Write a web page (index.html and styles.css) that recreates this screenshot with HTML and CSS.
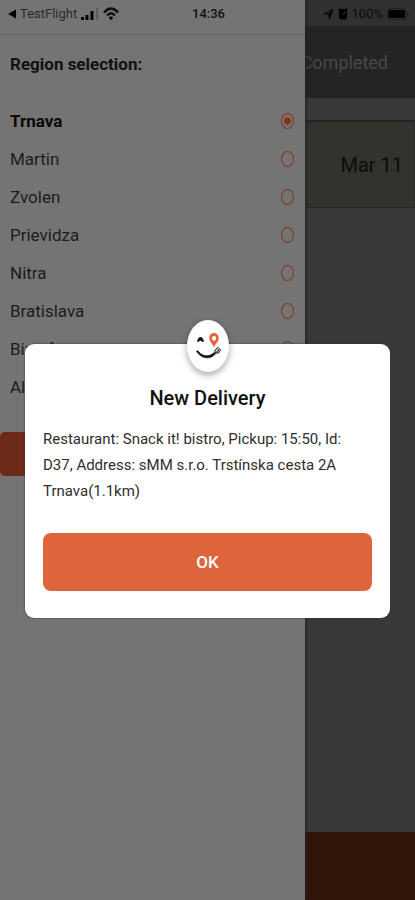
FILE: index.html
```html
<!DOCTYPE html>
<html lang="en">
<head>
<meta charset="utf-8">
<meta name="viewport" content="width=device-width, initial-scale=1">
<title>New Delivery</title>
<link rel="stylesheet" href="styles.css">
</head>
<body>
<div class="app">
  <main class="page">
    <nav class="tabs"><a href="#completed">Completed</a></nav>
    <section class="day"><h2>Mar 11</h2></section>
    <footer class="page-footer"></footer>
  </main>

  <aside class="drawer">
    <form class="regions">
      <h1>Region selection:</h1>
      <label class="region"><span>Trnava</span><input type="radio" name="region" checked></label>
      <label class="region"><span>Martin</span><input type="radio" name="region"></label>
      <label class="region"><span>Zvolen</span><input type="radio" name="region"></label>
      <label class="region"><span>Prievidza</span><input type="radio" name="region"></label>
      <label class="region"><span>Nitra</span><input type="radio" name="region"></label>
      <label class="region"><span>Bratislava</span><input type="radio" name="region"></label>
      <label class="region"><span>Bizref</span><input type="radio" name="region"></label>
      <label class="region"><span>All</span><input type="radio" name="region"></label>
      <button class="apply" type="button" aria-label="Apply"></button>
    </form>
  </aside>

  <header class="status">
    <div class="status-left">
      <svg width="8" height="10" viewBox="0 0 8 10"><path d="M8 0.5v9L0 5z"/></svg>
      <span class="carrier">TestFlight</span>
      <svg width="18" height="12" viewBox="0 0 18 12"><path d="M0 9h3v3H0zM4.500 7h3v5h-3zM9.500 3h3v9h-3z"/><path d="M15 0h2v12h-2z" opacity=".2"/></svg>
      <svg width="16" height="14" viewBox="0 0 16 14"><g fill="none" stroke="#111" stroke-width="2.400"><path d="M1 5.500Q8-2.500 15 5.500"/><path d="M4 8.500Q8 4 12 8.500"/></g><path d="M5.800 10.500Q8 8.500 10.200 10.500L8 13.200z"/></svg>
    </div>
    <time>14:36</time>
    <div class="status-right">
      <svg width="11" height="12" viewBox="0 0 11 12"><path d="M1 6 9.800 1.500 6.500 10.500 5.800 6.200z" fill="none" stroke="#0a0a0a" stroke-width="1.200" stroke-linejoin="round"/><path d="M5.500 6 9.800 1.500 6.500 10.500z"/></svg>
      <svg width="10" height="12" viewBox="0 0 10 12"><rect x="1" y="1" width="8" height="10.500" rx="2"/><path d="M.5 2 2.500.5M9.500 2 7.500.5" stroke="#0a0a0a" stroke-width="1.400"/><path d="M5 6.500 7 4" fill="none" stroke="#444"/></svg>
      <span>100%</span>
      <svg width="22" height="12" viewBox="0 0 22 12"><rect x=".5" y=".5" width="18.500" height="11" rx="2.500" fill="none" stroke="#202020"/><rect x="1.500" y="2" width="16.500" height="8" rx="1"/><path d="M20.200 4v4q1.300-.5 1.300-2t-1.300-2z" fill="#1b1b1b"/></svg>
    </div>
  </header>

  <div class="backdrop">
    <div class="dialog" role="dialog" aria-labelledby="dialog-title">
      <div class="badge">
        <svg width="28" height="32" viewBox="0 0 28 32">
          <path d="M3 11.500Q4 7 6.500 7T10 11.500L8.500 12Q6.500 9.500 4.500 12z" fill="#161616"/>
          <path d="M2.500 21.500C4 23 5 25 8 26.500 13 29 18.500 28 22 23L21 22C17 25.800 12 26.800 8 24.500 5.500 23 4.500 21.500 3.500 20.500z" fill="#161616" stroke="#161616" stroke-width=".8"/>
          <path d="M21 23Q20.500 20 22 19.500L24.500 17M22 23 25.800 18.500M22.500 23.500Q25 23 25.500 21.500L27 19.500" fill="none" stroke="#444" stroke-width="1.200"/>
          <path fill-rule="evenodd" fill="#e0643c" d="M20 3c-2.700 0-4.700 2.200-4.700 5.200 0 3.200 3.200 5.600 4.700 9 1.500-3.400 4.700-5.800 4.700-9 0-3-2-5.200-4.700-5.200zm0 2.700a2.100 2.500 0 1 1 0 5 2.100 2.500 0 1 1 0-5z"/>
        </svg>
      </div>
      <h2 id="dialog-title">New Delivery</h2>
      <p>Restaurant: Snack it! bistro, Pickup: 15:50, Id: D37, Address: sMM s.r.o. Trstínska cesta 2A Trnava(1.1km)</p>
      <button class="ok" type="button">OK</button>
    </div>
  </div>
</div>
</body>
</html>
```
FILE: styles.css
```css
* { box-sizing: border-box; }

body {
  margin: 0;
  font-family: Roboto, "Liberation Sans", sans-serif;
  color: #111;
}

h1, h2, p { margin: 0; }

.app {
  position: relative;
  min-height: 100vh;
  overflow: hidden;
  background: #383838;
}

.page {
  display: flex;
  flex-direction: column;
  min-height: 100vh;
  padding-top: 26px;
  background: linear-gradient(#303030 26px, #383838 26px);
}

.tabs {
  display: flex;
  justify-content: flex-end;
  align-items: center;
  height: 72px;
  padding-right: 27px;
  background: #242424;
}

.tabs a {
  color: #484848;
  font-size: 18px;
  text-decoration: none;
}

.day {
  display: flex;
  justify-content: flex-end;
  align-items: center;
  height: 88px;
  margin-top: 22px;
  padding: 0 11px 0 0;
  border: 1px solid #292927;
  border-top: 2px solid #242424;
  background: #33322e;
}

.day h2 {
  color: #0c0c0c;
  font-size: 20px;
  font-weight: 400;
}

.page-footer {
  height: 68px;
  margin-top: auto;
  background: #30150b;
}

.drawer {
  position: absolute;
  top: 0;
  bottom: 0;
  left: 0;
  width: 73.5%;
  padding-top: 34px;
  background: #747474;
  box-shadow: 1px 0 3px #222;
}

.regions {
  display: flex;
  flex-direction: column;
  border-top: 1px solid #686868;
}

.regions h1 {
  padding: 0 10px;
  margin-bottom: 9px;
  font-size: 17px;
  font-weight: 700;
  line-height: 58px;
}

.region {
  display: flex;
  justify-content: space-between;
  align-items: center;
  height: 38px;
  padding: 0 11px 0 10px;
  color: #1c1c1c;
  font-size: 17px;
}

.region:has(input:checked) {
  color: #080808;
  font-weight: 700;
}

.region input {
  appearance: none;
  width: 13px;
  height: 16px;
  margin: 0;
  border: 1px solid #873420;
  border-radius: 50%;
}

.region input:checked {
  background: radial-gradient(circle, #8f2e0d 3px, transparent 4px);
}

.apply {
  height: 44px;
  margin-top: 26px;
  border: 0;
  border-radius: 5px;
  background: #6b2b18;
}

.status {
  position: absolute;
  top: 0;
  left: 0;
  right: 0;
  display: grid;
  grid-template-columns: 1fr auto 1fr;
  align-items: center;
  height: 27px;
  padding: 0 6px 0 8px;
  font-size: 13px;
}

.status time { font-weight: 500; }

.status-left,
.status-right {
  display: flex;
  align-items: center;
  gap: 4px;
}

.carrier { color: #2b2b2b; }

.status-right {
  justify-content: flex-end;
  color: #0c0c0c;
}

.backdrop {
  position: absolute;
  top: 0;
  bottom: 0;
  left: 0;
  right: 0;
  display: flex;
  justify-content: center;
  align-items: center;
  padding: 62px 25px 0;
}

.dialog {
  position: relative;
  flex: 1;
  padding: 38px 18px 27px;
  border-radius: 9px;
  background: #fff;
  box-shadow: 0 0 2px #333;
}

.badge {
  position: absolute;
  top: -24px;
  left: 50%;
  display: flex;
  justify-content: center;
  align-items: center;
  width: 42px;
  height: 52px;
  margin-left: -21px;
  border-radius: 50%;
  background: #fff;
  box-shadow: 0 3px 7px rgba(0, 0, 0, 0.35);
}

.dialog h2 {
  font-size: 20px;
  font-weight: 500;
  line-height: 32px;
  text-align: center;
}

.dialog p {
  margin: 12px 0 29px;
  color: #2e2e2e;
  font-size: 15px;
  line-height: 26px;
}

.ok {
  display: block;
  width: 100%;
  height: 58px;
  border: 0;
  border-radius: 8px;
  background: #de643b;
  color: #fff;
  font: 500 17px Roboto, "Liberation Sans", sans-serif;
}
```
